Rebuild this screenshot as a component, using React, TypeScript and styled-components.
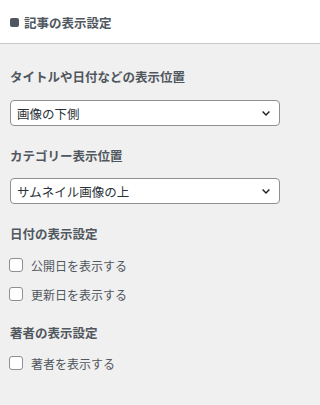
import styled, { createGlobalStyle } from "styled-components";

const GlobalStyle = createGlobalStyle`
  html, body {
    margin: 0;
    padding: 0;
    background: #f0f0f0;
    font-family: "Noto Sans CJK JP", "Noto Sans", sans-serif;
  }
`;

const Panel = styled.div`
  width: 320px;
  height: 405px;
  background: #f0f0f0;
  overflow: hidden;
`;

const Header = styled.header`
  height: 42px;
  background: #fff;
  border-bottom: 1px solid #c9c9cc;
  display: flex;
  align-items: center;
  gap: 5px;
  padding: 1px 10px 0;
  box-sizing: content-box;
`;

const Square = styled.span`
  width: 9px;
  height: 9px;
  border-radius: 2px;
  background: #50575e;
`;

const Title = styled.h2`
  margin: 0;
  font-size: 12.5px;
  font-weight: 700;
  color: #50575e;
`;

const Body = styled.div`
  padding: 23px 10px 0;
`;

const Group = styled.section<{ $top: number; $gap: number }>`
  margin-top: ${(p) => p.$top}px;
  display: flex;
  flex-direction: column;
  gap: ${(p) => p.$gap}px;
`;

const Label = styled.h3`
  margin: 0;
  font-size: 12.5px;
  line-height: 20px;
  font-weight: 700;
  color: #50575e;
`;

const SelectBox = styled.div`
  width: 270px;
  height: 26px;
  box-sizing: border-box;
  background: #fff;
  border: 1px solid #8c8f94;
  border-radius: 4px;
  display: flex;
  align-items: center;
  justify-content: space-between;
  padding: 0 9px 0 6px;
  font-size: 12.5px;
  color: #2c3338;
`;

const Rows = styled.div`
  display: flex;
  flex-direction: column;
  gap: 9px;
`;

const Row = styled.label`
  display: flex;
  align-items: center;
  gap: 8px;
  height: 20px;
  font-size: 12px;
  color: #50575e;
`;

const Box = styled.span`
  width: 14px;
  height: 14px;
  box-sizing: border-box;
  margin-left: -1px;
  border: 1px solid #8c8f94;
  border-radius: 3px;
  background: #fff;
`;

function Select({ value }: { value: string }) {
  return (
    <SelectBox>
      <span>{value}</span>
      <svg width="8" height="5" viewBox="0 0 8 5">
        <path d="M0.6 0.6 L4 4 L7.4 0.6" fill="none" stroke="#1e1e1e" strokeWidth="1.4" />
      </svg>
    </SelectBox>
  );
}

function Check({ text }: { text: string }) {
  return (
    <Row>
      <Box />
      {text}
    </Row>
  );
}

export default function App() {
  return (
    <>
      <GlobalStyle />
      <Panel>
        <Header>
          <Square />
          <Title>記事の表示設定</Title>
        </Header>
        <Body>
          <Group $top={0} $gap={13}>
            <Label>タイトルや日付などの表示位置</Label>
            <Select value="画像の下側" />
          </Group>
          <Group $top={20} $gap={12}>
            <Label>カテゴリー表示位置</Label>
            <Select value="サムネイル画像の上" />
          </Group>
          <Group $top={20} $gap={11}>
            <Label>日付の表示設定</Label>
            <Rows>
              <Check text="公開日を表示する" />
              <Check text="更新日を表示する" />
            </Rows>
          </Group>
          <Group $top={19} $gap={10}>
            <Label>著者の表示設定</Label>
            <Rows>
              <Check text="著者を表示する" />
            </Rows>
          </Group>
        </Body>
      </Panel>
    </>
  );
}
